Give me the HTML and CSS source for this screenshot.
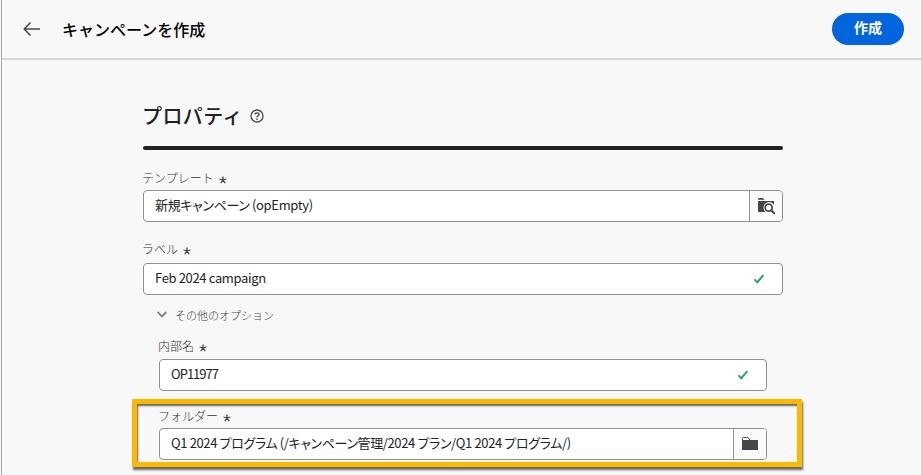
FILE: index.html
```html
<!DOCTYPE html>
<html lang="ja">
<head>
<meta charset="utf-8">
<title>キャンペーンを作成</title>
<link rel="stylesheet" href="styles.css">
</head>
<body>
<header class="topbar">
  <svg class="back" width="18" height="16" viewBox="0 0 18 16"><path d="M17 8H1.5M7.5 1.5L1.2 8l6.3 6.500"/></svg>
  <h1 class="page-title">キャンペーンを作成</h1>
  <button class="create">作成</button>
</header>
<main class="form">
  <div class="section">
    <h2 class="section-title">プロパティ</h2>
    <svg class="help" width="14" height="14" viewBox="0 0 14 14"><circle cx="7" cy="7" r="6"/><path d="M5 5.5C5.1 3.3 9 3.3 9 5.5 9 6.9 7 6.8 7 8.5M7 9.6v1.3"/></svg>
  </div>
  <div class="rule"></div>

  <label class="label label-template"><span>テンプレート</span><svg class="star" width="8" height="8" viewBox="0 0 8 8"><path d="M4 4V.4M4 4L.5 3M4 4l3.5-1M4 4L1.8 7.2M4 4l2.2 3.2"/></svg></label>
  <div class="field">
    <span class="value v-template">新規キャンペーン (opEmpty)</span>
    <span class="picker"><svg width="18" height="18" viewBox="0 0 18 18"><path fill="#464646" d="M1 2.2Q1 1 2 1h4l1.6 1.8H1zM1 4h16v4a5.500 5.500 0 0 0-9.800 5.200Q7.500 14.300 8.400 15H1.600Q1 15 1 14.300z"/><circle cx="11.7" cy="10.7" r="3.5" fill="#fafafa" stroke="#464646" stroke-width="1.7"/><path d="M14.2 13.2l3 3" stroke="#464646" stroke-width="2" stroke-linecap="round"/></svg></span>
  </div>

  <label class="label label-name"><span>ラベル</span><svg class="star" width="8" height="8" viewBox="0 0 8 8"><path d="M4 4V.4M4 4L.5 3M4 4l3.5-1M4 4L1.8 7.2M4 4l2.2 3.2"/></svg></label>
  <div class="field">
    <span class="value v-name">Feb 2024 campaign</span>
    <svg class="check" width="12" height="10" viewBox="0 0 12 10"><path d="M1.5 5.4L4.3 8.3 10.3 1.2"/></svg>
  </div>

  <div class="more">
    <svg class="chevron" width="10" height="7" viewBox="0 0 10 7"><path d="M.7 1l4.300 4.300L9.300 1"/></svg>
    <span>その他のオプション</span>
  </div>

  <div class="nested">
    <label class="label label-internal"><span>内部名</span><svg class="star" width="8" height="8" viewBox="0 0 8 8"><path d="M4 4V.4M4 4L.5 3M4 4l3.5-1M4 4L1.8 7.2M4 4l2.2 3.2"/></svg></label>
    <div class="field">
      <span class="value v-internal">OP11977</span>
      <svg class="check" width="12" height="10" viewBox="0 0 12 10"><path d="M1.5 5.4L4.3 8.3 10.3 1.2"/></svg>
    </div>
  </div>

  <div class="highlight">
    <label class="label label-folder"><span>フォルダー</span><svg class="star" width="8" height="8" viewBox="0 0 8 8"><path d="M4 4V.4M4 4L.5 3M4 4l3.5-1M4 4L1.8 7.2M4 4l2.2 3.2"/></svg></label>
    <div class="field">
      <span class="value v-folder">Q1 2024 プログラム (/キャンペーン管理/2024 プラン/Q1 2024 プログラム/)</span>
      <span class="picker"><svg width="18" height="16" viewBox="0 0 18 16"><path fill="#464646" d="M1 3h16v10.400q0 .6-.6.6H1.600Q1 14 1 13.400z"/><path fill="#fafafa" d="M9 2.500h8.500V4H9z"/><path fill="#fff" stroke="#464646" d="M1.500 4.500V2.400q0-.9.900-.9h4.200q.5 0 .8.500l1.200 1.700-.6.800z"/></svg></span>
    </div>
  </div>
</main>
</body>
</html>
```
FILE: styles.css
```css
* { box-sizing: border-box; }
body {
  margin: 0;
  width: 921px;
  height: 475px;
  overflow: hidden;
  background: #f8f8f8;
  border-left: 1px solid #f8f8f8;
  box-shadow: inset 1px 0 #a8a8a8;
  font-family: "Noto Sans CJK JP", sans-serif;
  color: #222;
}
svg { display: block; flex: none; fill: none; }
h1, h2 { margin: 0; }
.topbar {
  display: flex;
  align-items: center;
  height: 60px;
  margin-left: 1px;
  padding: 0 17px 0 21px;
  border-bottom: 2px solid #d4d4d4;
}
.back { stroke: #464646; stroke-width: 1.5; }
.page-title {
  margin-left: 21px;
  font-size: 16px;
  font-weight: 500;
  line-height: 24px;
  color: #000;
  white-space: nowrap;
}
.create {
  width: 72px;
  height: 32px;
  margin-left: auto;
  padding: 0 0 4px;
  border: 0;
  border-radius: 16px;
  background: #0265dc;
  color: #fff;
  font: 700 14px/20px "Noto Sans CJK JP", sans-serif;
}
.form { width: 640px; margin-left: 142px; }
.section { display: flex; align-items: center; height: 86px; padding-top: 26px; }
.section-title {
  width: 100px;
  font-size: 20px;
  font-weight: 500;
  line-height: 30px;
  letter-spacing: 0.4px;
  text-indent: -1px;
  white-space: nowrap;
}
.help { margin-left: 7px; stroke: #464646; stroke-width: 1.3; }
.rule { height: 4px; border-radius: 2px; background: #222; }
.label {
  display: flex;
  align-items: flex-end;
  font-size: 12px;
  font-weight: 300;
  line-height: 18px;
  color: #333;
  text-indent: -1px;
  white-space: nowrap;
}
.star { stroke: #464646; stroke-width: 1.3; margin: 0 0 3px 5px; }
.label-template { height: 40px; padding-bottom: 3px; }
.label-name { height: 41px; padding-bottom: 5px; }
.label-internal { height: 33px; padding-bottom: 4px; }
.label-folder { height: 24px; padding-bottom: 3px; }
.field {
  display: flex;
  align-items: center;
  height: 32px;
  border: 1px solid #909090;
  border-radius: 4px;
  background: #fff;
  overflow: hidden;
}
.value {
  flex: 1;
  padding: 0 0 2px 11px;
  font-size: 13px;
  line-height: 20px;
  white-space: nowrap;
  font-feature-settings: "palt";
}
.v-template, .v-name { letter-spacing: -0.35px; }
.v-internal { letter-spacing: -1px; }
.v-folder { letter-spacing: -0.37px; }
.picker {
  display: flex;
  align-items: center;
  justify-content: center;
  width: 33px;
  height: 30px;
  border-left: 1px solid #909090;
  background: #fafafa;
}
.check { margin-right: 17px; stroke: #2d9d70; stroke-width: 2; }
.more {
  display: flex;
  align-items: center;
  height: 38px;
  padding: 1px 0 0 14px;
  font-size: 11px;
  font-weight: 300;
  line-height: 18px;
  color: #444;
}
.chevron { margin-right: 8px; stroke: #858585; stroke-width: 1.9; }
.nested { margin: -7px 16px 0; }
.highlight {
  width: 670px;
  height: 68px;
  margin: 8px 0 0 -11px;
  padding: 0 30px 0 22px;
  border: 5px solid #fdb900;
  box-shadow: 1px 3px 2px #666, inset 1px 2px 2px #666;
}
```
